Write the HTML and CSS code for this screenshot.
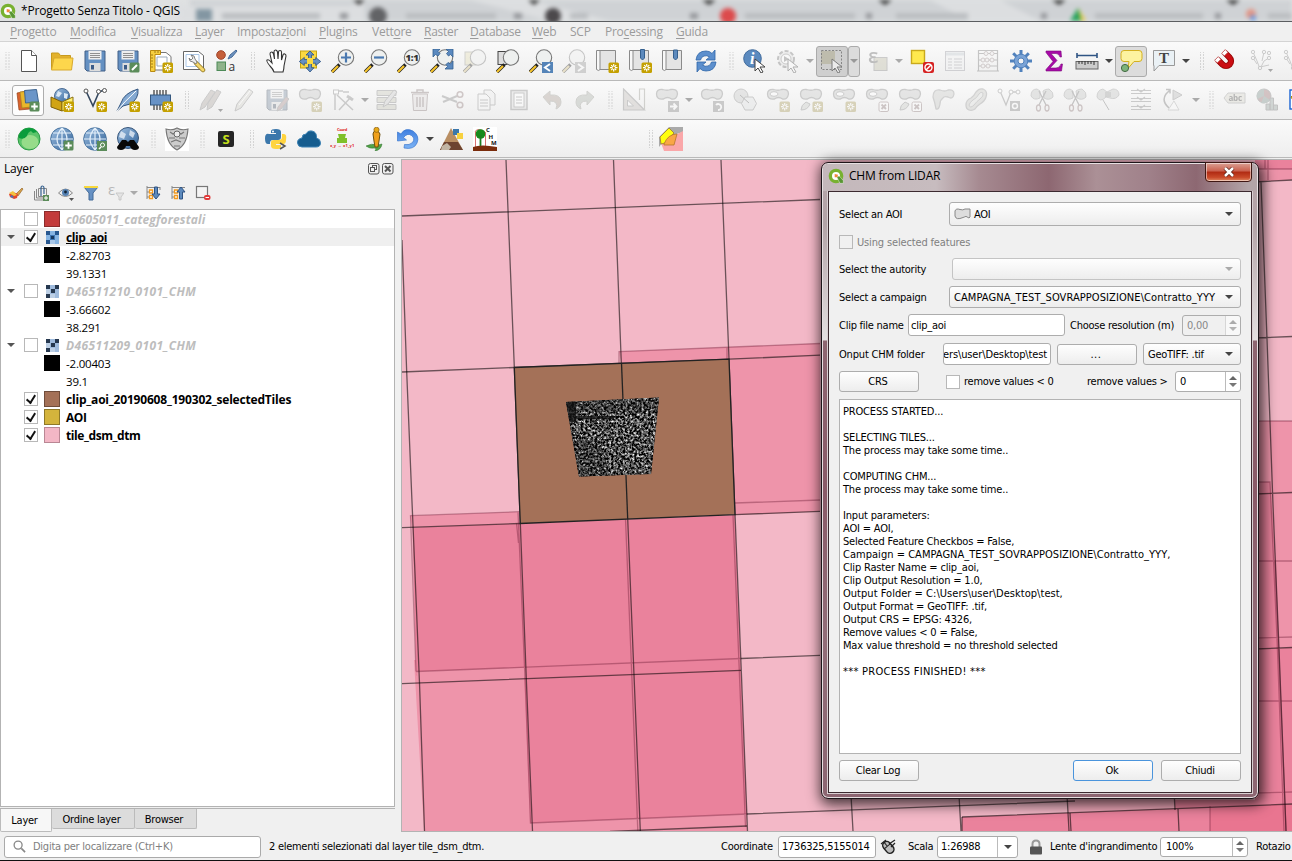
FILE: index.html
```html
<!DOCTYPE html>
<html lang="it">
<head>
<meta charset="utf-8">
<title>*Progetto Senza Titolo - QGIS</title>
<link rel="stylesheet" href="styles.css">
</head>
<body>
<svg class="defs" width="0" height="0">
  <defs>
    <linearGradient id="gGlobe" x1="0" y1="0" x2="1" y2="1"><stop offset="0" stop-color="#9fc0e2"/><stop offset="1" stop-color="#2d5f96"/></linearGradient>
    <linearGradient id="gUndo" x1="0" y1="0" x2="0" y2="1"><stop offset="0" stop-color="#3f7fe0"/><stop offset="1" stop-color="#7db4f5"/></linearGradient>
  </defs>
  <symbol id="b-new" viewBox="0 0 24 24"><rect x="13.5" y="13.5" width="10.5" height="10.5" rx="1.5" fill="#c4a000"/><path d="M18.7 15v7.5M15 18.7h7.5M16.2 16.2l5 5M21.2 16.2l-5 5" stroke="#fff" stroke-width="1.2"/><circle cx="18.7" cy="18.7" r="1.2" fill="#c4a000"/></symbol>
  <symbol id="b-add" viewBox="0 0 24 24"><rect x="13.5" y="13.5" width="10" height="10" rx="1.5" fill="#5b8c5a"/><path d="M18.5 15.2v6.6M15.2 18.5h6.6" stroke="#fff" stroke-width="1.8"/></symbol>
  <symbol id="b-del" viewBox="0 0 24 24"><rect x="14" y="14" width="9.5" height="9.5" rx="1.5" fill="#fff" stroke="#a87878"/><path d="M16.5 16.5l4.5 4.5M21 16.5l-4.500 4.500" stroke="#a87878" stroke-width="1.8"/></symbol>
  <symbol id="q" viewBox="0 0 24 24"><circle cx="12" cy="12" r="8.500" fill="#fff" stroke="#78b130" stroke-width="5"/><path d="M13 13l4-1 6 7v4h-5z" fill="#589632" stroke="#fff" stroke-width=".6"/><path d="M10 9l5 1-1 4-4 0z" fill="#f0883c"/></symbol>
  <symbol id="new" viewBox="0 0 24 24"><path d="M4.500 1.500h10l5 5v16h-15z" fill="#fff" stroke="#555"/><path d="M14.500 1.500v5h5" fill="#fff" stroke="#555"/></symbol>
  <symbol id="open" viewBox="0 0 24 24"><path d="M1.500 20V4h7l2 2.500h10V9" fill="#e3b22d" stroke="#c79a1e"/><path d="M1.500 21L4 9h19l-1.500 12z" fill="#fdd64c" stroke="#d8a92c"/></symbol>
  <symbol id="save" viewBox="0 0 24 24"><path d="M2 2h20v20H4l-2-2z" fill="#6490c2" stroke="#415f86"/><rect x="5.500" y="2" width="13" height="8.500" fill="#eee"/><path d="M7 4.500h10M7 6.500h10M7 8.500h10" stroke="#777" stroke-width=".8"/><rect x="6.500" y="14" width="11" height="8" fill="#ddd"/><rect x="8" y="16" width="3" height="4.500" fill="#3c5c88"/></symbol>
  <symbol id="saveas" viewBox="0 0 24 24"><use href="#save"/><rect x="13.500" y="13.500" width="10" height="10" rx="1.500" fill="#5b8c5a"/><path d="M16 21l5-5" stroke="#fff" stroke-width="2"/></symbol>
  <symbol id="layout" viewBox="0 0 24 24"><path d="M4 3.500h13l5 4V21H4z" fill="#fff" stroke="#777"/><path d="M8 8h10v9H8z" fill="none" stroke="#9ab" /><path d="M1.500 1.500h10v4H6v17H1.500z" fill="#f7cf3f" stroke="#b98a10"/><path d="M2 6h2M2 9h2M2 12h2M2 15h2M2 18h2M6 2v2M9 2v2" stroke="#8a6a10" stroke-width=".8"/><use href="#b-new"/></symbol>
  <symbol id="layman" viewBox="0 0 24 24"><path d="M1.500 2.500h15l5 4V20.500H1.500z" fill="#fff" stroke="#666"/><path d="M4 5.500h13v12H4z" fill="none" stroke="#aac6e6"/><path d="M14 14l7 7" stroke="#8b7220" stroke-width="4.500" stroke-linecap="round"/><path d="M14 14l7 7" stroke="#f4d66a" stroke-width="3" stroke-linecap="round"/><path d="M7 9q0 4 4 4l3 2 1-2-2-3q0-4-4-4l2 3-2 2z" fill="#eee" stroke="#777" stroke-width=".9"/></symbol>
  <symbol id="style" viewBox="0 0 24 24"><circle cx="6" cy="6" r="4.300" fill="#c55f3a" stroke="#a0452a"/><path d="M13 10l2-4 6-5 1 1-5 6z" fill="#6d93c0" stroke="#466a98"/><rect x="2" y="13" width="8.500" height="8.500" fill="#8fb38a" stroke="#4d8a57"/><text x="13.500" y="21.500" font-family="Open Sans" font-weight="400" font-size="12" fill="#333">a</text></symbol>
  <symbol id="hand" viewBox="0 0 24 24"><path d="M9 23q-1-3-4-6-4-5-3-6 2-1 4 2l1 1L5 5q0-2 1.500-2T8.500 5l1 5L9 3q0-2 1.500-2T12.500 3l.5 7 .5-7q0-1.500 1.500-1.500T16.500 3v8l1.500-5q.5-1.500 1.800-1T21 7l-2 10q0 3-1 6z" fill="#fff" stroke="#333" stroke-width="1.100"/></symbol>
  <symbol id="panto" viewBox="0 0 24 24"><rect x="2.500" y="2" width="16" height="17" fill="#fbd940" stroke="#c6a414"/><path d="M12 2l4 4h-2.500v4.500h4.200V8.500l5 4-5 4v-2.300h-4.200v4.500H16L12 23l-4-4.300h2.500v-4.500H6.300v2.300l-5-4 5-4v2h4.200V6H8z" fill="#6691c4" stroke="#2e5383" stroke-width=".8"/><rect x="9" y="9" width="6" height="6" fill="#fbd940"/></symbol>
  <symbol id="lens" viewBox="0 0 24 24"><path d="M8.500 15.500L1 23" stroke="#222" stroke-width="3.400"/><path d="M7 17l-6 6" stroke="#f7c52c" stroke-width="2.200"/><circle cx="15" cy="8.500" r="7.700" fill="#eef0ef" stroke="#777" stroke-width="1.100"/></symbol>
  <symbol id="zin" viewBox="0 0 24 24"><use href="#lens"/><path d="M15 3.500v10M10 8.500h10" stroke="#4a79b0" stroke-width="2.200"/></symbol>
  <symbol id="zout" viewBox="0 0 24 24"><use href="#lens"/><path d="M10 8.500h10" stroke="#4a79b0" stroke-width="2.200"/></symbol>
  <symbol id="z11" viewBox="0 0 24 24"><use href="#lens"/><text x="8.500" y="12" font-family="Open Sans" font-weight="800" font-size="9.500" fill="#333" textLength="13">1:1</text></symbol>
  <symbol id="zfull" viewBox="0 0 24 24"><use href="#lens"/><path d="M3 0h7L8 2.500l2 2L8 7 5.500 5.500 3 8zM23 0v8l-2.500-2.500L18.500 7 16.500 4.500l2-2L16 0zM23 20h-8l2.500-2.500L16 15.500l2-2 2.500 1.500L23 12z" fill="#5b89bf" stroke="#34608f" stroke-width=".8"/></symbol>
  <symbol id="zsel" viewBox="0 0 24 24"><rect x="2" y="3" width="11" height="13" fill="#f0e07a" stroke="#998"/><use href="#lens"/></symbol>
  <symbol id="zlay" viewBox="0 0 24 24"><rect x="2" y="2.500" width="11" height="13" fill="#ddd" stroke="#444"/><use href="#lens"/></symbol>
  <symbol id="zlast" viewBox="0 0 24 24"><use href="#lens"/><rect x="13" y="13" width="11" height="11" fill="#5584b8"/><path d="M21 15l-5 3.500 5 3.500" fill="none" stroke="#fff" stroke-width="2"/></symbol>
  <symbol id="znext" viewBox="0 0 24 24"><use href="#lens"/><rect x="13" y="13" width="11" height="11" fill="#999"/><path d="M16 15l5 3.500-5 3.500" fill="none" stroke="#fff" stroke-width="2"/></symbol>
  <symbol id="scroll" viewBox="0 0 24 24"><path d="M4 1.500h16.500v19H4" fill="#e4e4e4" stroke="#8a8a8a"/><path d="M1.500 1.500h3.500v19q-1 2-3.500 0z" fill="#f8f8f8" stroke="#8a8a8a"/></symbol>
  <symbol id="view3" viewBox="0 0 24 24"><use href="#scroll"/><use href="#b-new"/></symbol>
  <symbol id="bmnew" viewBox="0 0 24 24"><use href="#scroll"/><path d="M12.500 0.500h4v8.500l-2 2-2-2z" fill="#5d8abd" stroke="#35608f"/><use href="#b-new"/></symbol>
  <symbol id="bm" viewBox="0 0 24 24"><use href="#scroll"/><path d="M12.500 1h4v8l-2 2-2-2z" fill="#5d8abd" stroke="#35608f"/></symbol>
  <symbol id="refresh" viewBox="0 0 24 24"><path d="M2 11Q3 2 12 2q4 0 6 2.500L21 1v10h-9l3.500-3Q13 6 10 7q-3 1-3.500 4zM22 13q-1 9-10 9-4 0-6-2.500L3 23V13h9l-3.500 3Q11 18 14 17q3-1 3.500-4z" fill="#5c8fcd" stroke="#2f66a8" stroke-width=".8"/></symbol>
  <symbol id="cursor" viewBox="0 0 24 24"><path d="M12 10v12l3-3 3 5 2-1-3-5h5z" fill="#fff" stroke="#444"/></symbol>
  <symbol id="info" viewBox="0 0 24 24"><circle cx="9.500" cy="9.500" r="8.800" fill="#5b8abf" stroke="#3f6a9c"/><text x="7" y="15" font-family="Liberation Serif" font-style="italic" font-weight="bold" font-size="16" fill="#fff">i</text><use href="#cursor"/></symbol>
  <symbol id="action" viewBox="0 0 24 24"><circle cx="10" cy="10" r="8" fill="#ddd" stroke="#777" stroke-width="2" stroke-dasharray="4 2"/><circle cx="10" cy="10" r="5" fill="#fff" stroke="#888"/><path d="M8 7l5 3-5 3z" fill="#777"/><use href="#cursor"/></symbol>
  <symbol id="select" viewBox="0 0 24 24"><rect x="1" y="2" width="14" height="13" fill="#b4b098"/><path d="M1.500 1.500h20v19h-20z" fill="none" stroke="#555" stroke-dasharray="2 1.500"/><use href="#cursor"/></symbol>
  <symbol id="selexp" viewBox="0 0 24 24"><rect x="7" y="8.500" width="13" height="13" fill="#c4c088" stroke="#888"/><text x="1" y="14" font-family="Open Sans" font-weight="600" font-size="20" fill="#666">ε</text></symbol>
  <symbol id="desel" viewBox="0 0 24 24"><rect x="1.500" y="1.500" width="13" height="13" fill="#ffe94e" stroke="#c9a91c" stroke-width="1.400"/><rect x="13" y="13" width="11" height="11" rx="2" fill="#d62222"/><circle cx="18.500" cy="18.500" r="3.500" fill="none" stroke="#fff" stroke-width="1.400"/><path d="M16 21l5-5" stroke="#fff" stroke-width="1.400"/></symbol>
  <symbol id="table" viewBox="0 0 24 24"><rect x="2.500" y="2.500" width="19" height="19" fill="#eef1f4" stroke="#99a"/><path d="M3 5h18" stroke="#bcd" stroke-width="3"/><path d="M5 10h4M11 10h8M5 13h4M11 13h8M5 16h4M11 16h8M5 19h4M11 19h8" stroke="#99a"/></symbol>
  <symbol id="abacus" viewBox="0 0 24 24"><path d="M2 1.500h20M2.500 1v21M21.500 1v21M1 22h22M3 4.500h18M3 11h18M3 17h18" fill="none" stroke="#777" stroke-width="1.200"/><g fill="#f3ecec" stroke="#a88"><circle cx="10" cy="4.500" r="2"/><circle cx="16" cy="4.500" r="2"/><circle cx="7" cy="11" r="2"/><circle cx="11" cy="11" r="2"/><circle cx="16" cy="11" r="2"/><circle cx="7" cy="17" r="2"/><circle cx="12" cy="17" r="2"/></g></symbol>
  <symbol id="cog" viewBox="0 0 24 24"><g stroke="#5182bd" stroke-width="3"><path d="M12 1v22M1 12h22M4.200 4.200l15.600 15.600M19.800 4.200L4.200 19.800"/></g><circle cx="12" cy="12" r="6.800" fill="#7aa3d6" stroke="#5182bd"/><circle cx="12" cy="12" r="3" fill="#f4f4f4" stroke="#5182bd"/></symbol>
  <symbol id="sigma" viewBox="0 0 24 24"><path d="M4 2h15l.5 6H18q-1-3.500-4-3.500H9l6 7-7 7.500h6q4 0 5-4h1.500L19.500 22H4v-1.500l7-8L4 3.500z" fill="#a80aa8" stroke="#7b0a7b" stroke-width=".6"/></symbol>
  <symbol id="measure" viewBox="0 0 24 24"><path d="M2 6.500h20M2 4v5M22 4v5" stroke="#2f5484" stroke-width="1.600"/><rect x="1" y="12.500" width="22" height="7.500" fill="#ccc" stroke="#666"/><path d="M4 12v3M7 12v3M10 12v4M13 12v3M16 12v3M19 12v4" stroke="#333" stroke-width="1"/></symbol>
  <symbol id="tip" viewBox="0 0 24 24"><path d="M5 1.500h15q3 0 3 3v5q0 3-3 3h-5l-6 7 1-7H5q-3 0-3-3v-5q0-3 3-3z" fill="#fdf3a0" stroke="#d4b021"/><circle cx="6" cy="19" r="3.600" fill="#7db37a" stroke="#446b44"/></symbol>
  <symbol id="ann" viewBox="0 0 24 24"><path d="M1.500 1.500h21v15H7L2 22v-5.500h-.5z" fill="#eaf1f5" stroke="#999"/><text x="7" y="14" font-family="Liberation Serif" font-weight="bold" font-size="15" fill="#444">T</text></symbol>
  <symbol id="magnet" viewBox="0 0 24 24"><g transform="rotate(-45 12 12) translate(12 12) scale(.95) translate(-12 -12)"><path d="M4 5v7a8 8 0 0 0 16 0V5h-5.500v7a2.500 2.500 0 0 1-5 0V5z" fill="#cb0d12" stroke="#900"/><path d="M4 3h5.500v4H4zM14.500 3H20v4h-5.500z" fill="#fff" stroke="#b44" stroke-width=".8"/></g></symbol>
  <symbol id="vtx" viewBox="0 0 24 24"><path d="M4 3l4 9 3 8 4-8 5-3M4 9l4 6M11 18l9-2M15 3l-2 9" fill="none" stroke="#888"/><g fill="#eee" stroke="#888"><circle cx="4" cy="3" r="1.700"/><circle cx="4" cy="9" r="1.700"/><circle cx="15" cy="3" r="1.700"/><circle cx="20" cy="9" r="1.700"/><circle cx="11" cy="19" r="1.700"/><circle cx="20" cy="4" r="1.700"/></g><path d="M19 20h5l-2.500 3z" fill="#333"/></symbol>
  <symbol id="dsrc" viewBox="0 0 24 24"><path d="M1 5l9-2 4 18-11 1z" fill="#d9632c" stroke="#97401a" stroke-width=".7"/><path d="M4 4l11-1v16l-9 1z" fill="#e9b62b" stroke="#a5811e" stroke-width=".7"/><path d="M8.500 2.500l12-1 2 12.500-13 1z" fill="#6a95c8" stroke="#3c638f"/><use href="#b-add"/></symbol>
  <symbol id="gpkg" viewBox="0 0 24 24"><circle cx="12" cy="8" r="7.500" fill="url(#gGlobe)" stroke="#4a6c94"/><path d="M8 3l4 2-3 4-3-1zM14 5l4 1-1 5-3-1z" fill="#dbe8f4"/><path d="M1 9l11 5v9L1 19z" fill="#d1a414" stroke="#7d6009"/><path d="M12 14l11-5v9l-11 5z" fill="#fff176" stroke="#8b7010"/><use href="#b-new"/></symbol>
  <symbol id="vnew" viewBox="0 0 24 24"><path d="M3 3l7 15 6-14 5-2" fill="none" stroke="#34475e" stroke-width="1.600"/><g fill="#fff" stroke="#555"><circle cx="3" cy="3" r="2"/><circle cx="15.500" cy="3.500" r="2"/><circle cx="21.500" cy="2.500" r="2"/></g><use href="#b-new"/></symbol>
  <symbol id="feather" viewBox="0 0 24 24"><path d="M1 23L5 15Q8 5 22 1q1 10-8 15l-7 2z" fill="#84a9d2" stroke="#33557f"/><path d="M1 23Q8 14 20 3" fill="none" stroke="#fff"/><use href="#b-new"/></symbol>
  <symbol id="chip" viewBox="0 0 24 24"><path d="M5 2v20M8 2v20M11 2v20M14 2v20M17 2v20" stroke="#444" stroke-width="1.300"/><rect x="1.500" y="7" width="20" height="10" fill="#6792c6" stroke="#35587f"/><use href="#b-new"/></symbol>
  <symbol id="pencil" viewBox="0 0 24 24"><path d="M3 23l2-7L17 1l4 3L9 20z" fill="#d8d4c4" stroke="#888"/><path d="M7 17L18 3" stroke="#fff"/></symbol>
  <symbol id="pencils" viewBox="0 0 24 24"><path d="M1 22l2-7L12 2l4 2L6 19zM8 22l1-7L18 2l4 2-9 15z" fill="#b9a79c" stroke="#888"/><path d="M19 21h5l-2.500 3z" fill="#333"/></symbol>
  <symbol id="saveed" viewBox="0 0 24 24"><use href="#save"/><path d="M12 23l1-4 8-10 3 2-8 10z" fill="#c88" stroke="#888"/></symbol>
  <symbol id="blob" viewBox="0 0 24 24"><path d="M1.500 6q0-5 6-4.500 5 1.500 8 0 7-1 7 4.500-1 6-6 5-4-3-8 0Q1.500 12 1.500 6z" fill="#c6cac6" stroke="#888" stroke-width="1.300"/></symbol>
  <symbol id="blobn" viewBox="0 0 24 24"><use href="#blob"/><use href="#b-new"/></symbol>
  <symbol id="blobd" viewBox="0 0 24 24"><use href="#blob"/><ellipse cx="8" cy="6" rx="4" ry="2.300" fill="#fff" stroke="#888"/><use href="#b-del"/></symbol>
  <symbol id="blobp" viewBox="0 0 24 24"><use href="#blob"/><path d="M2 22q0-5 5-8l4 2q-2 6-9 6z" fill="#c9cfc6" stroke="#888"/><use href="#b-new"/></symbol>
  <symbol id="blobr" viewBox="0 0 24 24"><use href="#blob"/><ellipse cx="8" cy="6" rx="4" ry="2.300" fill="#fff" stroke="#888"/><use href="#b-new"/></symbol>
  <symbol id="blobx" viewBox="0 0 24 24"><use href="#blob"/><path d="M2 22q0-5 5-8l4 2q-2 6-9 6z" fill="#c9cfc6" stroke="#888"/><use href="#b-del"/></symbol>
  <symbol id="blobm" viewBox="0 0 24 24"><use href="#blob"/><rect x="13" y="13" width="11" height="11" fill="#888"/><path d="M15 18.500h6M18.500 15.500l3 3-3 3" fill="none" stroke="#fff" stroke-width="1.800"/></symbol>
  <symbol id="bloro" viewBox="0 0 24 24"><use href="#blob"/><rect x="13" y="13" width="11" height="11" fill="#888"/><path d="M16 17a3 3 0 1 1 2 5" fill="none" stroke="#fff" stroke-width="1.800"/></symbol>
  <symbol id="simp" viewBox="0 0 24 24"><circle cx="8" cy="8" r="7" fill="#c6cac6" stroke="#888"/><path d="M12 9h8l3.500 6.500L20 22h-8l-3.500-6.500z" fill="#dfe3e6" stroke="#888"/><path d="M7 7l9 8" stroke="#666"/></symbol>
  <symbol id="reshape" viewBox="0 0 24 24"><path d="M2 9q0-8 7-7 5 2 8 0 6-1 6 4-1 6-6 3-4-1-5 1-3 2-3 6-1 6-4 5-1-6-3-12z" fill="#c8ccc4" stroke="#999" stroke-width="1.300"/></symbol>
  <symbol id="offset" viewBox="0 0 24 24"><path d="M2 17q0-5 5-7 3-2 5-6 3-4 7-3 5 2 3 8-1 4-6 7-3 2-5 5-3 2-6 1-3-1-3-5z" fill="#c9cac0" stroke="#999" stroke-width="1.300"/><path d="M5 17q1-3 4-5 4-2 6-6 2-3 4-1 1 3-3 6-3 2-6 6-4 4-5 0z" fill="#dfe1dd" stroke="#999"/></symbol>
  <symbol id="vupd" viewBox="0 0 24 24"><path d="M3 3l6 14 5-13h6" fill="none" stroke="#888" stroke-width="1.300"/><g fill="#fff" stroke="#888"><circle cx="3" cy="3" r="2"/><circle cx="14" cy="4" r="2"/><circle cx="21" cy="4" r="2"/></g><rect x="13" y="13" width="10" height="10" fill="#888"/><circle cx="18" cy="18" r="2.500" fill="none" stroke="#fff" stroke-width="1.500"/></symbol>
  <symbol id="split" viewBox="0 0 24 24"><path d="M1 8q0-7 6-7l3 2v7q-6 3-9-2zM13 3q2-2 6-2 5 3 4 8-4 4-9 1z" fill="#c3c7c3" stroke="#999"/><path d="M9 3l7 14M16 3L9 17" stroke="#777" stroke-width="1.300"/><ellipse cx="8.500" cy="20" rx="2" ry="3" fill="none" stroke="#a77" stroke-width="1.300"/><ellipse cx="17" cy="20" rx="2" ry="3" fill="none" stroke="#a77" stroke-width="1.300"/></symbol>
  <symbol id="merge" viewBox="0 0 24 24"><path d="M1 9q0-7 6-8l4 3 6-3q6 0 6 6-3 5-9 3l-4-1Q4 15 1 9z" fill="#c3c7c3" stroke="#999"/><path d="M10 4v5M12 4v5M14 4v5M7 12l6 10" stroke="#777"/></symbol>
  <symbol id="mattr" viewBox="0 0 24 24"><path d="M2 2.500h20M2 5.500h20M2 10.500h20M2 13.500h20M2 18.500h20M2 21.500h20M8 1l4 3 4-3M8 9l4 3 4-3M8 17l4 3 4-3" fill="none" stroke="#888" stroke-width="1.100"/></symbol>
  <symbol id="rots" viewBox="0 0 24 24"><path d="M7 20Q-1 13 4 6l4-4M4 1.500h4v4" fill="none" stroke="#777" stroke-width="1.500"/><path d="M11 2v10l9-5z" fill="#bbb" stroke="#888"/><path d="M6 22h11l-5-9z" fill="#fff" stroke="#aaa"/></symbol>
  <symbol id="vtool" viewBox="0 0 24 24"><path d="M4 22V3h8M12 4h6M6 7L22 22M8 22L20 9" fill="none" stroke="#888" stroke-width="1.500"/><rect x="2.500" y="2" width="5" height="4" fill="#fff" stroke="#888"/><path d="M16 8l6 4" stroke="#888" stroke-width="3"/></symbol>
  <symbol id="mform" viewBox="0 0 24 24"><path d="M2 2.500h19v5H2zM2 9.500h19v5H2zM2 16.500h19v5H2z" fill="#c9c9a8" stroke="#888"/><path d="M8 19l2-6 9-11 3 2-9 12z" fill="#ccc" stroke="#888"/></symbol>
  <symbol id="trash" viewBox="0 0 24 24"><path d="M4.500 6h15l-1 16.500h-13z" fill="#e8dcdc" stroke="#977"/><path d="M3 4.500h18M9 4V2h6v2M9 9v10M12 9v10M15 9v10" fill="none" stroke="#977" stroke-width="1.500"/></symbol>
  <symbol id="cut" viewBox="0 0 24 24"><path d="M1 8l15 6M2 14L16 8" stroke="#888" stroke-width="2"/><circle cx="19" cy="6.500" r="2.800" fill="none" stroke="#a77" stroke-width="1.600"/><circle cx="19" cy="17" r="2.800" fill="none" stroke="#a77" stroke-width="1.600"/></symbol>
  <symbol id="copy" viewBox="0 0 24 24"><path d="M10 2h7l4 4v11H10z" fill="#eee" stroke="#888"/><path d="M4 6h8l4 4v12H4z" fill="#f6f6f6" stroke="#888"/><path d="M6 12h8M6 15h8M6 18h8" stroke="#888"/></symbol>
  <symbol id="paste" viewBox="0 0 24 24"><rect x="4" y="2.500" width="16" height="19" fill="#ddd" stroke="#888" stroke-width="1.500"/><rect x="7" y="5" width="10" height="14" fill="#fff" stroke="#888"/><path d="M9 9h6M9 12h6M9 15h6M9 2.500h6" stroke="#888" stroke-width="1.200"/></symbol>
  <symbol id="undo" viewBox="0 0 24 24"><path d="M3 9l7-6v4q11-1 11 7 0 5-5 7 3-8-6-8v4z" fill="#bf9e84" stroke="#998"/></symbol>
  <symbol id="redo" viewBox="0 0 24 24"><path d="M21 9l-7-6v4Q3 6 3 14q0 5 5 7-3-8 6-8v4z" fill="#a5b5a0" stroke="#998"/></symbol>
  <symbol id="tri" viewBox="0 0 24 24"><path d="M1.500 1l21 21h-21z" fill="#cbbfb4" stroke="#888" stroke-width="1.200"/><path d="M5.500 12l6 6h-6z" fill="#fff" stroke="#888"/><path d="M17.500 12V1h5v21" fill="none" stroke="#998" stroke-width="1.200"/></symbol>
  <symbol id="abc" viewBox="0 0 24 24"><path d="M1 10l4-5h17v10H5z" fill="#dcd9be" stroke="#999"/><text x="5.500" y="13" font-family="Open Sans" font-weight="bold" font-size="8" fill="#444">abc</text></symbol>
  <symbol id="pie" viewBox="0 0 24 24"><circle cx="8" cy="8" r="7" fill="#c66" stroke="#777"/><path d="M8 8V1A7 7 0 0 0 1.500 11zM8 8l6 4q-3 4-9 3z" fill="#6a9a8c"/><path d="M10 22v-6h4v6zM14 22v-12h3.500v12zM17.500 22v-5h4v5z" fill="#8aa9a0" stroke="#777"/></symbol>
  <symbol id="lbl" viewBox="0 0 24 24"><rect x="1" y="2" width="22" height="19" fill="#fff" stroke="#1a64d4" stroke-width="1.400"/><path d="M2 9l4-4h6v9H5z" fill="#ffe04a" stroke="#a80"/></symbol>
  <symbol id="green" viewBox="0 0 24 24"><circle cx="12" cy="12" r="11" fill="#5cc46a" stroke="#2c9a45"/><ellipse cx="13" cy="15" rx="8.500" ry="7" fill="#96dc8a"/><path d="M2 8q3-7 11-7 5 1 7 4l-4 1-2-2q-3 1-4 5-3 4-8 2z" fill="#0a9c3c"/></symbol>
  <symbol id="globe" viewBox="0 0 24 24"><circle cx="12" cy="12" r="11.300" fill="url(#gGlobe)" stroke="#47739f"/><path d="M12 1v22M1 12h22M3 6h18M3 18h18M12 1Q2 12 12 23M12 1q10 11 0 22" fill="none" stroke="#e3effa" stroke-width="1.200"/></symbol>
  <symbol id="globea" viewBox="0 0 24 24"><use href="#globe"/><use href="#b-add"/></symbol>
  <symbol id="globes" viewBox="0 0 24 24"><use href="#globe"/><rect x="14" y="14" width="10" height="10" fill="#5b8c5a"/><circle cx="19.500" cy="18" r="2" fill="none" stroke="#fff"/><path d="M18 20l-2 2" stroke="#fff" stroke-width="1.400"/></symbol>
  <symbol id="bino" viewBox="0 0 24 24"><circle cx="12" cy="11" r="10.500" fill="url(#gGlobe)" stroke="#36557a"/><path d="M5 4l5 3-2 5-5-2zM14 3l5 3-2 5-4-3z" fill="#e6eef6" opacity=".8"/><path d="M6 13h4l2 2 2-2h4l5 7q0 3-4 3t-5-4h-4q-1 4-5 4t-4-3z" fill="#080808"/></symbol>
  <symbol id="shield" viewBox="0 0 24 24"><rect width="24" height="24" fill="#fff"/><path d="M1 2q6 2 11-1 5 3 11 1-1 16-11 21Q2 18 1 2z" fill="#ccc" stroke="#777" stroke-width="1.100"/><path d="M5 5l3 2 4-2 4 2 3-2M4 11h6M14 11h6M6 15l5-2 5 2M9 19h6" fill="none" stroke="#777" stroke-width="1.200"/><circle cx="12" cy="7" r="3" fill="#eee" stroke="#666"/></symbol>
  <symbol id="scp" viewBox="0 0 24 24"><rect x="4" y="4" width="16" height="16" rx="2" fill="#262626"/><text x="8.500" y="16.500" font-family="Open Sans" font-weight="bold" font-size="12.500" fill="#c5e01c" textLength="7" lengthAdjust="spacingAndGlyphs">S</text></symbol>
  <symbol id="py" viewBox="0 0 24 24"><path d="M12 2q5 0 5 3v5q0 3-3 3H9q-3 0-3 3v1H4q-3 0-3-5.500T5 7h7V6H7V4q0-2 5-2z" fill="#3b77ab"/><path d="M18 7h2q3 0 2 6 0 4-3 4h-7v1h5v2q0 2-5 2t-5-3v-4q0-2 3-2h5q3 0 3-3z" fill="#ffd43f"/><circle cx="9" cy="4.500" r="1" fill="#fff"/><path d="M16 16l5 3-5 3" fill="none" stroke="#555" stroke-width="1.500"/></symbol>
  <symbol id="cloud" viewBox="0 0 24 24"><path d="M5 20q-4 0-4.500-4T5 11q0-4 4-4 2-4 6-3 5 1 4.500 7 4 1 4 5T19 20z" fill="#165d8f" stroke="#3e83b4"/></symbol>
  <symbol id="coord" viewBox="0 0 24 24"><text x="7" y="4" font-family="Open Sans" font-weight="bold" font-size="4" fill="#e01b24" textLength="10">Coord</text><path d="M8 7h8l-1 4h2v5H7v-5h2z" fill="#7fc02a"/><text x="0" y="20" font-family="Open Sans" font-weight="bold" font-size="4" fill="#e01b24" textLength="24">x,y → x1,y1</text></symbol>
  <symbol id="worm" viewBox="0 0 24 24"><path d="M3 19q5-3 12-1l4-1q-1 6-7 7 2-3-1-3-4 1-8-2z" fill="#52a447" stroke="#2c6e2a" stroke-width=".5"/><path d="M12 20l-1-6-1-7q0-3 3-3t4 3l-1 7-1 6z" fill="#f0a01c" stroke="#6b5010"/><circle cx="13.500" cy="2.800" r="2.600" fill="#e6a818" stroke="#8a5c10" stroke-width=".7"/></symbol>
  <symbol id="bundo" viewBox="0 0 24 24"><path d="M8 21q10 2 13-5t-4-12Q9 0 5 7L1.500 5v9l9-1-3-2.500q4-5 8-2t1 7q-3 3-8 2z" fill="url(#gUndo)" stroke="#3b77cf" stroke-width=".7"/></symbol>
  <symbol id="pyra" viewBox="0 0 24 24"><path d="M11 1l12 22H0z" fill="#b98e63"/><path d="M4 15h14l5 8H0z" fill="#6d4330"/><path d="M2 19l5-3 4 4-2 3H1z" fill="#c2b5a4"/><path d="M13 2h6v6h-6z" fill="#3b77ab"/><path d="M17 6h6v6h-6z" fill="#f7d13f"/></symbol>
  <symbol id="chm" viewBox="0 0 24 24"><rect width="24" height="24" fill="#fff"/><path d="M2.500 20V5M12.500 20V5M2 5q2-5 10 0" fill="none" stroke="#c33" stroke-width=".7"/><circle cx="7.500" cy="7" r="4.800" fill="#188a1c"/><path d="M7.500 8v12" stroke="#1f7c22" stroke-width="1.800"/><path d="M0 20q8-3 24 0v4H0z" fill="#7a2c0c"/><g font-family="Open Sans" font-weight="bold" font-size="6" fill="#111"><text x="13" y="5">C</text><text x="15.500" y="11.500">H</text><text x="18" y="18">M</text></g></symbol>
  <symbol id="poly" viewBox="0 0 24 24"><path d="M10 0h14v5L8 10 0 20V10z" fill="#aaa"/><path d="M5 24L2 16 24 4v20z" fill="#faa7a9"/><path d="M1 10l9-9 5 5-9 10-4 1z" fill="#ffff10" stroke="#9a7b2c" stroke-width=".8"/><path d="M5 17q4-10 13-10l-3 11H5z" fill="#f9a646" stroke="#b5762a" stroke-width=".8"/></symbol>
  <symbol id="ras" viewBox="0 0 13 13"><rect width="13" height="13" fill="#86b4e2"/><path d="M0 0h4v4H0zM9 0h4v4H9zM0 9h4v4H0z" fill="#27578f"/><path d="M4 4h5v5H4z" fill="#3f77b5"/><path d="M5 5h3v3H5z" fill="#16375e"/><path d="M4 9h5v4H4z" fill="#a9c8ea"/></symbol>
  <symbol id="ras2" viewBox="0 0 13 13"><rect width="13" height="13" fill="#9fbbdd"/><path d="M0 0h4v4H0zM9 0h4v4H9zM5 4h4v4H5zM0 9h4v4H0z" fill="#26384f"/><path d="M4 9h5v4H4zM0 4h4v5H0z" fill="#bdd0e6"/></symbol>
  <symbol id="brush" viewBox="0 0 16 16"><path d="M8 9l6-6 1 1-5 7z" fill="#d7a14a" stroke="#8c5c20" stroke-width=".6"/><path d="M1 9l4-2 5 2-1 4-3 1-4-2z" fill="#e4452c"/><path d="M1 8l4-2 4 4-3 1z" fill="#f3c33f"/><path d="M2 12l2-2 2 3z" fill="#3b78c9"/></symbol>
  <symbol id="grp" viewBox="0 0 16 16"><path d="M1.500 6v9h9M3.500 4v9h9M5.500 3.500h8v8h-8z" fill="none" stroke="#888"/><path d="M8 11V3q0-2 1.500-2T11 3v6" fill="none" stroke="#34608f" stroke-width="1.200"/><rect x="10" y="10" width="6" height="6" fill="#5b8c5a"/><path d="M13 11v4M11 13h4" stroke="#fff"/></symbol>
  <symbol id="eye" viewBox="0 0 16 16"><path d="M.500 8q7-8 14 0-7 7-14 0z" fill="#eee" stroke="#888"/><circle cx="7.500" cy="7.500" r="3.500" fill="#5481b3"/><circle cx="7.500" cy="7" r="1.400" fill="#123"/><path d="M11 13h5l-2.500 3z" fill="#555"/></symbol>
  <symbol id="funnel" viewBox="0 0 16 16"><path d="M1 2h14l-5 6v7H6V8z" fill="#6691c4" stroke="#436a98"/><path d="M1 1h14v2H1z" fill="#f7d83c"/></symbol>
  <symbol id="epsf" viewBox="0 0 16 16"><text x="0" y="10" font-family="Open Sans" font-weight="400" font-size="15" fill="#b8b8b8">ε</text><path d="M8 8h8l-3 4v3h-2v-3z" fill="#e4e4e4" stroke="#c0c0c0" stroke-width=".8"/></symbol>
  <symbol id="expand" viewBox="0 0 16 16"><path d="M2 1v13M2 2.500h13M2 7h3M2 12h3M15 2v3" fill="none" stroke="#888"/><path d="M4.500 5h3v3h-3zM4.500 10.500h3v3h-3z" fill="#fff" stroke="#f39a1e" stroke-width="1.300"/><path d="M9.500 2h3v7H15l-4 5-4-5h2.500z" fill="#5d8abd" stroke="#2e5383"/></symbol>
  <symbol id="collapse" viewBox="0 0 16 16"><path d="M2 1v13M2 2.500h13M2 7h3M2 12h3" fill="none" stroke="#888"/><path d="M4.500 5h3v3h-3zM4.500 10.500h3v3h-3z" fill="#fff" stroke="#f39a1e" stroke-width="1.300"/><path d="M9.500 14h3V7H15l-4-5-4 5h2.500z" fill="#5d8abd" stroke="#2e5383"/></symbol>
  <symbol id="remove" viewBox="0 0 16 16"><rect x="1.500" y="1.500" width="11" height="11" fill="#f4f4f4" stroke="#777" stroke-width="1.200"/><rect x="9" y="10" width="6.500" height="5" rx="2" fill="#e23b3b"/><path d="M10.500 12.500h3.500" stroke="#fff"/></symbol>
</svg>

<header class="titlebar">
  <svg class="glass" viewBox="0 0 1292 21" preserveAspectRatio="none">
    <g class="smear"><path d="M190 0h1102v21H190z" fill="#cfd2d5"/><path d="M180 6h170l12-6h2v21H180zM470 0h60l80 21h-60zM930 0h70l40 21h-70z" fill="#dcdee0"/><rect x="196" y="9" width="16" height="12" fill="#8396a2"/><path d="M222 13h98v6h-98zM406 13h90v6h-90zM570 13h18v6h-18zM745 13h110v6H745zM896 13h72v6h-72zM1095 13h108v6h-108zM1268 13h24v6h-24z" fill="#bbbec1"/><circle cx="378" cy="16" r="9" fill="#626366"/><circle cx="553" cy="16" r="8" fill="#4c494c"/><circle cx="728" cy="16" r="8" fill="#dc4b4c"/><path d="M340 13h8v6h-8zM514 13h8v6h-8zM690 13h8v6h-8zM866 13h6v6h-6zM1041 13h6v6h-6zM1215 13h6v6h-6z" fill="#96989c"/><path d="M353 0h12l-6 5zM528 0h12l-6 5zM702 0h14l-7 5zM878 0h14l-7 5zM1052 0h14l-7 5zM1226 0h14l-7 5z" fill="#333"/><path d="M1078 8l7 13h-15z" fill="#22a15b"/><path d="M1078 8l8 13h-5z" fill="#e9c83e"/><circle cx="1251" cy="14" r="5" fill="#e39483"/><circle cx="1253" cy="18" r="3" fill="#6d9be0"/></g>
  </svg>
  <svg class="logo"><use href="#q"/></svg><span>*Progetto Senza Titolo - QGIS</span>
</header>

<nav class="menu">
  <span class="m1"><u>P</u>rogetto</span><span class="m2"><u>M</u>odifica</span><span class="m3"><u>V</u>isualizza</span><span class="m4"><u>L</u>ayer</span><span class="m5">Impostaz<u>i</u>oni</span><span class="m6"><u>P</u>lugins</span><span class="m7">Vett<u>o</u>re</span><span class="m8"><u>R</u>aster</span><span class="m9"><u>D</u>atabase</span><span class="m10"><u>W</u>eb</span><span class="m11">SCP</span><span class="m12">Pro<u>c</u>essing</span><span class="m13"><u>G</u>uida</span>
</nav>

<div class="bar">
  <i class="g g12"></i><b><svg><use href="#new"/></svg></b><b><svg><use href="#open"/></svg></b><b><svg><use href="#save"/></svg></b><b><svg><use href="#saveas"/></svg></b><b><svg><use href="#layout"/></svg></b><b><svg><use href="#layman"/></svg></b><b><svg><use href="#style"/></svg></b>
  <i class="g g17"></i><b><svg><use href="#hand"/></svg></b><b><svg><use href="#panto"/></svg></b><b><svg><use href="#zin"/></svg></b><b><svg><use href="#zout"/></svg></b><b><svg><use href="#z11"/></svg></b><b><svg><use href="#zfull"/></svg></b><b class="off"><svg><use href="#zsel"/></svg></b><b><svg><use href="#zlay"/></svg></b><b><svg><use href="#zlast"/></svg></b><b class="off"><svg><use href="#znext"/></svg></b><b><svg><use href="#view3"/></svg></b><b><svg><use href="#bmnew"/></svg></b><b><svg><use href="#bm"/></svg></b><b><svg><use href="#refresh"/></svg></b>
  <i class="g g15"></i><b><svg><use href="#info"/></svg></b><b class="off"><svg><use href="#action"/></svg></b><i class="a a12 dim"></i><b class="down dimmed"><svg><use href="#select"/></svg></b><i class="a a12 down"></i><b class="off expr"><svg><use href="#selexp"/></svg></b><i class="a a13 dim"></i><b><svg><use href="#desel"/></svg></b><b class="off"><svg><use href="#table"/></svg></b><b class="off"><svg><use href="#abacus"/></svg></b><b><svg><use href="#cog"/></svg></b><b><svg><use href="#sigma"/></svg></b><b><svg><use href="#measure"/></svg></b><i class="a a11"></i><b class="down tipb"><svg><use href="#tip"/></svg></b><b><svg><use href="#ann"/></svg></b><i class="a a12"></i>
  <i class="g g17"></i><b><svg><use href="#magnet"/></svg></b><b class="off vx"><svg><use href="#vtx"/></svg></b><b class="off"><svg><use href="#vtx"/></svg></b>
</div>
<div class="bar">
  <i class="g g12"></i><b class="chk"><svg><use href="#dsrc"/></svg></b><b><svg><use href="#gpkg"/></svg></b><b><svg><use href="#vnew"/></svg></b><b><svg><use href="#feather"/></svg></b><b><svg><use href="#chip"/></svg></b>
  <i class="g g17"></i><b class="off"><svg><use href="#pencils"/></svg></b><b class="off"><svg><use href="#pencil"/></svg></b><b class="off"><svg><use href="#saveed"/></svg></b><b class="off"><svg><use href="#blobn"/></svg></b><b class="off"><svg><use href="#vtool"/></svg></b><i class="a a11 dim"></i><b class="off"><svg><use href="#mform"/></svg></b><b class="off"><svg><use href="#trash"/></svg></b><b class="off"><svg><use href="#cut"/></svg></b><b class="off"><svg><use href="#copy"/></svg></b><b class="off"><svg><use href="#paste"/></svg></b><b class="off"><svg><use href="#undo"/></svg></b><b class="off"><svg><use href="#redo"/></svg></b>
  <i class="g g15"></i><b class="off"><svg><use href="#tri"/></svg></b><b class="off"><svg><use href="#blobm"/></svg></b><i class="a a12 dim"></i><b class="off"><svg><use href="#bloro"/></svg></b><b class="off"><svg><use href="#simp"/></svg></b><b class="off"><svg><use href="#blobr"/></svg></b><b class="off"><svg><use href="#blobp"/></svg></b><b class="off"><svg><use href="#blobr"/></svg></b><b class="off"><svg><use href="#blobd"/></svg></b><b class="off"><svg><use href="#blobx"/></svg></b><b class="off"><svg><use href="#reshape"/></svg></b><b class="off"><svg><use href="#offset"/></svg></b><b class="off"><svg><use href="#vupd"/></svg></b><b class="off"><svg><use href="#split"/></svg></b><b class="off"><svg><use href="#split"/></svg></b><b class="off"><svg><use href="#merge"/></svg></b><b class="off"><svg><use href="#mattr"/></svg></b><b class="off"><svg><use href="#rots"/></svg></b><i class="a a12 dim"></i>
  <i class="g g15"></i><b class="off"><svg><use href="#abc"/></svg></b><b class="off"><svg><use href="#pie"/></svg></b><b><svg><use href="#lbl"/></svg></b>
</div>
<div class="bar last">
  <i class="g g12"></i><b><svg><use href="#green"/></svg></b><b><svg><use href="#globea"/></svg></b><b><svg><use href="#globes"/></svg></b><b><svg><use href="#bino"/></svg></b>
  <i class="g g15"></i><b><svg><use href="#shield"/></svg></b><i class="g g15"></i><b><svg><use href="#scp"/></svg></b><i class="g g17"></i><b><svg><use href="#py"/></svg></b><b><svg><use href="#cloud"/></svg></b><b><svg><use href="#coord"/></svg></b><b><svg><use href="#worm"/></svg></b><b><svg><use href="#bundo"/></svg></b><i class="a a11"></i><b><svg><use href="#pyra"/></svg></b><b><svg><use href="#chm"/></svg></b>
  <i class="g gwide"></i><b><svg><use href="#poly"/></svg></b>
</div>

<main class="work">
  <aside class="panel">
    <div class="phead"><span>Layer</span><svg class="pbtns" viewBox="0 0 26 12"><g fill="none" stroke="#555"><rect x=".5" y=".5" width="10.500" height="10.500" rx="2"/><rect x="4.500" y="2.500" width="4" height="4"/><rect x="2.500" y="4.500" width="4" height="4" fill="#f0f0f0"/><rect x="14.500" y=".5" width="10.500" height="10.500" rx="2"/><path d="M17 3l5.500 5.500M22.500 3L17 8.500" stroke-width="2"/></g></svg></div>
    <div class="ptools"><svg><use href="#brush"/></svg><svg><use href="#grp"/></svg><svg><use href="#eye"/></svg><svg><use href="#funnel"/></svg><svg><use href="#epsf"/></svg><i class="a dim"></i><svg><use href="#expand"/></svg><svg><use href="#collapse"/></svg><svg><use href="#remove"/></svg></div>
    <div class="tree">
      <div class="row"><i class="ex"></i><i class="cb"></i><i class="sw red"></i><em>c0605011_categforestali</em></div>
      <div class="row cur"><i class="ex on"></i><i class="cb on"></i><svg><use href="#ras"/></svg><strong class="ul">clip_aoi</strong></div>
      <div class="row leg"><i class="sw blk"></i><span>-2.82703</span></div>
      <div class="row leg"><i class="sw"></i><span>39.1331</span></div>
      <div class="row"><i class="ex on"></i><i class="cb"></i><svg><use href="#ras2"/></svg><em class="wide">D46511210_0101_CHM</em></div>
      <div class="row leg"><i class="sw blk"></i><span>-3.66602</span></div>
      <div class="row leg"><i class="sw"></i><span>38.291</span></div>
      <div class="row"><i class="ex on"></i><i class="cb"></i><svg><use href="#ras2"/></svg><em class="wide">D46511209_0101_CHM</em></div>
      <div class="row leg"><i class="sw blk"></i><span>-2.00403</span></div>
      <div class="row leg"><i class="sw"></i><span>39.1</span></div>
      <div class="row"><i class="ex"></i><i class="cb on"></i><i class="sw brn"></i><strong class="long">clip_aoi_20190608_190302_selectedTiles</strong></div>
      <div class="row"><i class="ex"></i><i class="cb on"></i><i class="sw yel"></i><strong>AOI</strong></div>
      <div class="row"><i class="ex"></i><i class="cb on"></i><i class="sw pnk"></i><strong>tile_dsm_dtm</strong></div>
    </div>
    <div class="tabs"><span class="tab act">Layer</span><span class="tab t2">Ordine layer</span><span class="tab t3">Browser</span></div>
  </aside>
  <div class="map">
    <svg viewBox="402 160 890 671">
      <defs>
        <filter id="noise" x="0" y="0" width="1" height="1" color-interpolation-filters="sRGB"><feTurbulence type="fractalNoise" baseFrequency=".43" numOctaves="3" seed="8"/><feColorMatrix values="1.800 .9 0 0 -1.050  1.800 .9 0 0 -1.050  1.800 .9 0 0 -1.050  0 0 0 0 1"/></filter>
        <clipPath id="aoi"><path d="M566 402l93-4.500-8 76.500-72 2.500z"/></clipPath>
      </defs>
      <rect x="402" y="160" width="890" height="671" fill="#f3b8c7"/>
      <g fill="#ee94aa">
        <path d="M619 351.500l201-8.200V511.500L735 515l-6-156-108 4z"/>
        <path d="M410 515.700l109-4 1 12-108 4zM414 660h8l105-5 5 176H424z"/>
        <path d="M1255 160h37v20l-37 2z"/>
        <path d="M1255 421h37v230h-37z"/><path d="M532 815l215-6v22H532z"/><path d="M1068 800h107v31h-107z" opacity=".4"/>
      </g>
      <g fill="#ea829c">
        <path d="M412.500 527.500l107.500-4 215-8.500 6 156 6 143-217 9-6-148-108 .6z"/>
        <path d="M1255 160h37v9h-37zM1255 482h15l6 79 3 87 13-1v184H1175V800h80z"/><path d="M962 817l330-13v27H962z"/>
      </g>
      <path d="M416 671.500l109-3.700v9.500l-106 4z" fill="#ee94aa"/>
      <path d="M1210 808l82-4v27h-82z" fill="#e97590"/>
      <g fill="none" stroke="#000" stroke-opacity=".56" stroke-width="1.300">
        <path d="M506 160l8.300 207 6 156 6 156 6.200 152M613.500 160l7.800 203 6.400 156 6.300 156 6.300 156M721 160l8 199 6 155 6.300 157 6.200 160M402 240l4.700 132 5 123 1.500 35 6.300 153 5 148"/>
        <path d="M402 216l418-16.500M402 372l112-4.500 215-8.300 91-4M402 527.700l118-4.200M735 514.600l85-3.200M402 683.600l339-13.300M741 658.500l79-3.200M747 814l68-2.600 260-10.400M610 831.500l137-5.500M962 817l330-13"/>
        <path d="M851 795l2 36M959 795l2 36M1067 795l2 36M1174 790l1 20M962 817v14M1070 813l1 18M1178 809l1 22"/>
        <path d="M1255 182l37-2M1255 338l37-1.500M1255 494l37-1.500M1255 649l37-1.500M1261 182l6 157 6 166 6 144 6 155 1 27"/>
      </g>
      <g fill="none" stroke="#5c0f28" stroke-opacity=".35" stroke-width="1.300">
        <path d="M619 363v-11.500l201-8M727 359v-11M735 503l85-3M416 671.500l-5.500-155.800 109-4M416 671.500l325-13M518 512l8 190 4.500 121 217-9M625.500 519l6.300 156 6 156M733 515l6.300 156 6.200 156M516.500 523l2 20"/>
        <path d="M1255 169h37M1265 160v9M1268 160v20M1255 421h37M1255 561h37M1255 638l37-1M1255 701h37M1255 793l37-1M1210 806v25M1255 482h15l7 156 7 193M1275 561l11 270"/>
      </g>
      <path d="M514.300 367.500l214.700-8.300 6 155.400-214.700 8.900z" fill="#a47158" stroke="#222" stroke-width="1.300"/>
      <path d="M621.500 363l6.200 156" stroke="#222" stroke-width="1.300"/>
      <g clip-path="url(#aoi)"><rect x="564" y="396" width="98" height="82" fill="#111"/><rect x="564" y="396" width="98" height="82" filter="url(#noise)"/><path d="M564 398h12v24h-10zM576 416h38v3h-38z" fill="#111" opacity=".8"/><path d="M576 400h84l-2 12h-82zM570 440h30l10 38h-36z" fill="#111" opacity=".25"/></g>
    </svg>
  </div>
</main>

<footer class="status">
  <div class="find"><svg viewBox="0 0 14 14"><circle cx="5.500" cy="5.500" r="4.300" fill="none" stroke="#888" stroke-width="1.400"/><path d="M9 9l4 4" stroke="#888" stroke-width="1.800"/></svg><span>Digita per localizzare (Ctrl+K)</span></div>
  <span class="msg">2 elementi selezionati dal layer tile_dsm_dtm.</span>
  <span class="s1">Coordinate</span><span class="box coordbox">1736325,5155014</span>
  <svg class="mouse" viewBox="0 0 16 16"><g transform="rotate(-40 8 8)"><rect x="4" y="2" width="8" height="13" rx="4" fill="#bbb" stroke="#222" stroke-width="1.500"/><path d="M8 2v5M4 7h8" stroke="#222"/></g><path d="M9 5l6-4M1 5l5-4M11 8l4-4" stroke="#222" stroke-width="1.200"/></svg>
  <span class="s2">Scala</span><span class="box scale"><span>1:26988</span><i class="a"></i></span>
  <svg class="lock" viewBox="0 0 14 16"><path d="M3.500 8V5q0-3.500 3.500-3.500T10.500 5v3" fill="none" stroke="#999" stroke-width="2"/><rect x="1" y="7.500" width="12" height="8" rx="1" fill="#555"/></svg>
  <span class="s3">Lente d'ingrandimento</span><span class="box mag"><span>100%</span><i class="sp"></i></span><span class="s4">Rotazio</span>
</footer>

<section class="dlg">
  <div class="dtitle"><svg><use href="#q"/></svg><span>CHM from LIDAR</span><div class="close"><svg viewBox="0 0 12 10"><path d="M2 1l8 8M10 1L2 9" stroke="#5b2018" stroke-width="4"/><path d="M2 1l8 8M10 1L2 9" stroke="#fff" stroke-width="2.500"/></svg></div></div>
  <div class="dbody">
    <div class="r r1"><label>Select an AOI</label><div class="combo"><svg viewBox="0 0 17 12"><path d="M1 3q1-3 5-1.500 3 1 5-.500h5v8l-1 1q-3-3-6-.500-7 3-8-1.500z" fill="#ddd" stroke="#888"/></svg><span>AOI</span><i class="a"></i></div></div>
    <div class="r r2"><i class="cb"></i><span>Using selected features</span></div>
    <div class="r r3"><label>Select the autority</label><div class="combo"><i class="a dim"></i></div></div>
    <div class="r r4"><label>Select a campaign</label><div class="combo"><span class="camp">CAMPAGNA_TEST_SOVRAPPOSIZIONE\Contratto_YYY</span><i class="a"></i></div></div>
    <div class="r r5"><label>Clip file name</label><div class="inp">clip_aoi</div><label class="l2">Choose resolution (m)</label><div class="spin off2"><span>0,00</span><i class="sp"></i></div></div>
    <div class="r r6"><label>Onput CHM folder</label><div class="inp"><span>ers\user\Desktop\test</span></div><div class="btn">...</div><div class="combo"><span>GeoTIFF: .tif</span><i class="a"></i></div></div>
    <div class="r r7"><div class="btn">CRS</div><i class="cb"></i><label class="l1">remove values &lt; 0</label><label class="l2">remove values &gt;</label><div class="spin"><span>0</span><i class="sp"></i></div></div>
    <pre class="log">PROCESS STARTED...

SELECTING TILES...
The process may take some time..

COMPUTING CHM...
The process may take some time..

Input parameters:
AOI = AOI,
Selected Feature Checkbos = False,
<span class="caps">Campaign = CAMPAGNA_TEST_SOVRAPPOSIZIONE\Contratto_YYY,</span>
Clip Raster Name = clip_aoi,
Clip Output Resolution = 1.0,
<span class="caps">Output Folder = C:\Users\user\Desktop\test,</span>
Output Format = GeoTIFF: .tif,
Output CRS = EPSG: 4326,
Remove values &lt; 0 = False,
Max value threshold = no threshold selected

<span class="fin">*** PROCESS FINISHED! ***</span></pre>
    <div class="r r8"><div class="btn">Clear Log</div><div class="btn ok">Ok</div><div class="btn">Chiudi</div></div>
  </div>
</section>
</body>
</html>
```
FILE: styles.css
```css
* { box-sizing: border-box; }
body { margin: 0; width: 1292px; height: 861px; overflow: hidden; position: relative; background: #f0f0f0; color: #000; display: flex; flex-direction: column; font: 11px/13px "DejaVu Sans Condensed", "DejaVu Sans", sans-serif; letter-spacing: -0.25px; border-bottom: 1px solid #111; white-space: nowrap; }
.defs { position: absolute; visibility: hidden; }
i, b { font-style: normal; flex: none; display: block; }

.titlebar { height: 22px; flex: none; background: #dfe1e2; border-bottom: 1px solid #5b5d60; position: relative; display: flex; align-items: center; font: 12px/16px "Open Sans", sans-serif; letter-spacing: -0.16px; overflow: hidden; }
.glass { position: absolute; inset: 0; width: 1292px; height: 21px; }
.smear { filter: blur(2.2px); }
.logo { width: 16px; height: 16px; position: relative; }
.titlebar span { margin-left: 5px; position: relative; }
.menu { height: 20px; flex: none; border-bottom: 1px solid #d4d4d4; display: flex; align-items: center; font: 12px/18px "Open Sans", sans-serif; color: #9b9b9b; padding-left: 10px; letter-spacing: -0.25px; }
.menu u { text-underline-offset: 2px; }
.m1 { width: 60px; } .m2 { width: 61px; } .m3 { width: 64px; } .m4 { width: 42px; } .m5 { width: 82px; } .m6 { width: 53px; } .m7 { width: 52px; } .m8 { width: 46px; } .m9 { width: 62px; } .m10 { width: 38px; } .m11 { width: 35px; } .m12 { width: 71px; }

.bar { height: 39px; flex: none; display: flex; align-items: center; background: linear-gradient(#fafafa, #eeeeee); border-bottom: 1px solid #b9b9b9; overflow: hidden; }
.bar.last { height: 38px; }
.bar b { width: 33px; height: 33px; display: flex; align-items: center; justify-content: center; border-radius: 3px; }
.bar svg { width: 24px; height: 24px; flex: none; }
.off svg { opacity: .38; filter: grayscale(.6); }
.down { background: #dcdcdc; border: 1px solid #ababab; height: 31px !important; }
b.down { width: 32px !important; }
.tipb { margin-left: 1px; }
.vx { margin-left: 2px; }
.dimmed { background: #cfcfcf; }
.dimmed svg { opacity: .6; }
.chk { background: #fdfdfd; border: 1px solid #adadad; width: 32px !important; margin-right: 1px; height: 31px !important; }
.expr { margin: 0 -3px 0 2px; }
.g { height: 18px; background: radial-gradient(circle, #b4b4b4 .7px, transparent 1px) center / 3px 3px; background-clip: content-box; }
.g12 { width: 12px; padding: 0 2px 0 4px; }
.g15 { width: 16px; padding: 0 4px 0 6px; }
.g17 { width: 17px; padding: 0 5px 0 6px; }
.gwide { width: 153px; padding: 0 1px 0 146px; }
.a { width: 12px; height: 20px; display: flex; align-items: center; justify-content: center; border-radius: 3px; }
.a::before { content: ""; border: 4px solid transparent; border-top: 4px solid #444; border-bottom: 0; }
.a.dim::before { border-top-color: #aaa; }
.a.down::before { border-top-color: #999; }
.a13 { width: 13px; }
.a11 { width: 11px; }

.work { flex: none; height: 674px; display: flex; }
.panel { width: 401px; padding-right: 6px; display: flex; flex-direction: column; }
.phead { height: 22px; display: flex; justify-content: space-between; align-items: center; padding: 0 1px 0 4px; font: 12px/16px "Open Sans", sans-serif; letter-spacing: -0.2px; }
.pbtns { width: 26px; height: 12px; }
.ptools { height: 29px; display: flex; align-items: center; gap: 9px; padding: 0 0 3px 8px; }
.ptools svg { width: 16px; height: 16px; flex: none; }
.ptools .a { width: 6px; margin-left: -2px; }
.ptools .a + svg { margin-left: -1px; }
.tree { height: 598px; border: 1px solid #b3b3b3; background: #fff; font: 12px/18px "Open Sans", sans-serif; letter-spacing: 0; }
.row { height: 18px; display: flex; align-items: center; }
.row.cur { background: #efefef; }
.row svg { width: 13px; height: 13px; margin: 0 7px 0 2px; }
.row.leg { padding-left: 43px; letter-spacing: -0.2px; font-size: 11.500px; }
.row em, .row strong, .row span { padding-top: 1px; }
.row em { font-weight: bold; color: #bdbdbd; letter-spacing: 0.15px; }
.row em.wide { letter-spacing: 0.38px; }
.row strong { font-weight: bold; letter-spacing: -0.42px; }
.row strong.long { letter-spacing: -0.19px; }
.ul { text-decoration: underline; }
.ex { width: 23px; height: 10px; }
.ex.on::before { content: ""; display: block; margin: 3px 0 0 6px; width: 0; border: 4px solid transparent; border-top: 4px solid #555; border-bottom: 0; }
.cb { width: 14px; height: 14px; border: 1px solid #b8b8b8; background: #fff; margin-right: 6px; }
.cb.on::before { content: ""; display: block; width: 4px; height: 8px; margin: 0 0 0 3px; border: solid #111; border-width: 0 2px 2px 0; transform: rotate(32deg) skewY(8deg); }
.sw { width: 16px; height: 16px; margin-right: 6px; }
.red { background: #c33b3b; border: 1px solid #8a2c2c; }
.blk { background: #000; }
.brn { background: #a47158; border: 1px solid #6f4c3b; }
.yel { background: #d4b43c; border: 1px solid #8e7828; }
.pnk { background: #f3b7c6; border: 1px solid #b98794; }
.tabs { display: flex; align-items: flex-start; border-top: 1px solid #b3b3b3; margin-top: 1px; font: 11px/13px "DejaVu Sans Condensed", sans-serif; }
.tab { height: 20px; padding: 4px 3px 0 0; text-align: center; background: #dcdcdc; border: 1px solid #bbb; border-top: 0; border-left: 0; border-radius: 0 0 2px 2px; }
.act { width: 52px; height: 23px; background: #f7f7f7; border-left: 1px solid #bbb; padding-top: 5px; }
.t2 { width: 83px; } .t3 { width: 62px; }
.map { width: 891px; border: 1px solid #b3b3b3; border-width: 1px 0 1px 1px; margin-top: 1px; height: 673px; overflow: hidden; }
.map svg { width: 890px; height: 671px; display: block; }

.status { height: 28px; flex: none; display: flex; align-items: center; padding: 1px 0 0 4px; }
.status > * { flex: none; }
.find { width: 257px; height: 22px; border: 1px solid #aaa; border-radius: 3px; background: #fff; display: flex; align-items: center; color: #808080; padding-left: 8px; }
.find svg { width: 13px; height: 13px; margin-right: 7px; }
.msg { width: 452px; margin-left: 8px; letter-spacing: -0.28px; }
.s1 { width: 57px; }
.box { height: 22px; border: 1px solid #aaa; border-radius: 3px; background: #fff; display: flex; align-items: center; padding-left: 3px; justify-content: space-between; }
.coordbox { width: 98px; }
.mouse { width: 16px; height: 16px; margin: 0 12px 0 4px; }
.s2 { width: 29px; }
.scale { width: 81px; }
.scale .a { width: 20px; border-left: 1px solid #bbb; border-radius: 0; }
.lock { width: 14px; height: 16px; margin: 0 7px 0 11px; }
.s3 { width: 110px; }
.mag { width: 88px; padding-left: 5px; height: 20px; }
.s4 { margin-left: 8px; }
.sp { width: 15px; height: 100%; border-left: 1px solid #bbb; display: flex; flex-direction: column; justify-content: center; align-items: center; gap: 3px; }
.sp::before, .sp::after { content: ""; border: 4px solid transparent; border-top: 0; border-bottom: 4px solid #666; }
.sp::after { border-bottom: 0; border-top: 4px solid #777; }

.dlg { position: absolute; left: 821px; top: 162px; width: 438px; height: 637px; border: 1px solid #1d1519; border-radius: 7px; padding: 0 6px 6px; background: linear-gradient(#b8a6aa 0, #b3a3a7 60px, #e4dfe0 177px, #8e6671 178px, #8a5a68 330px, #926d78 470px, #8d6672 100%); box-shadow: inset 0 0 0 1px #e6dfe1, 2px 3px 13px 3px rgba(0,0,0,.7); }
.dtitle { height: 27px; display: flex; align-items: center; font: 12px/16px "Open Sans", sans-serif; letter-spacing: -0.2px; background: linear-gradient(90deg, #c4b8bb 0, #c7bcbf 26%, #a68a91 36%, #8d6771 52%, #ab9096 63%, #a0818a 75%, #8d6872 86%, #b3a5a8 98%); margin: 1px -5px 0; padding: 0 0 3px 5px; border-radius: 5px 5px 0 0; position: relative; }
.dtitle svg { width: 16px; height: 16px; margin-right: 5px; }
.close { position: absolute; right: 5px; top: -2px; width: 47px; height: 20px; border: 1px solid #3f1713; border-radius: 0 0 4px 4px; background: linear-gradient(#dba094, #c9604d 45%, #b02a12 50%, #c94a2a 80%, #e08a62); box-shadow: inset 0 0 0 1px rgba(255,255,255,.5); display: flex; align-items: center; justify-content: center; }
.close svg { width: 12px; height: 10px; margin: 0; }
.dbody { height: 602px; background: #f0f0f0; border: 1px solid #3c2a30; box-shadow: 0 0 0 1px #d9cfd2; padding: 10px 10px 0; }
.r { display: flex; align-items: center; }
.combo, .btn, .inp, .spin { border: 1px solid #adadad; border-radius: 3px; background: linear-gradient(#fefefe, #ededed); height: 22px; display: flex; align-items: center; flex: none; }
.combo { padding-left: 4px; }
.combo .a { margin-left: auto; margin-right: 5px; }
.btn { width: 80px; justify-content: center; height: 21px; padding-right: 2px; }
.inp, .spin { background: #fff; padding-left: 2px; overflow: hidden; }
.spin { justify-content: space-between; padding-left: 4px; }
.r label { flex: none; }
.camp { letter-spacing: 0.08px; }
.r1 { height: 24px; } .r1 label { width: 110px; } .r1 .combo { width: 292px; height: 24px; } .r1 svg { width: 17px; height: 12px; margin-right: 3px; }
.r2 { height: 16px; margin-top: 8px; color: #808080; letter-spacing: -0.15px; } .r2 .cb { background: #f0f0f0; margin-right: 4px; }
.r3 { height: 22px; margin-top: 8px; } .r3 label { width: 113px; } .r3 .combo { width: 289px; border-color: #c4c4c4; }
.r4 { height: 22px; margin-top: 6px; } .r4 label { width: 110px; } .r4 .combo { width: 292px; }
.r5 { height: 22px; margin-top: 6px; } .r5 label { width: 69px; } .r5 .inp { width: 157px; } .r5 .l2 { width: 112px; margin-left: 5px; } .r5 .spin { width: 59px; height: 21px; }
.off2 { color: #888; background: #f0f0f0; }
.off2 .sp { opacity: .5; background: #fff; }
.r6 { height: 22px; margin-top: 7px; } .r6 label { width: 104px; letter-spacing: -0.18px; } .r6 .inp { width: 108px; justify-content: flex-end; padding: 0 3px 0 0; letter-spacing: -0.13px; } .r6 .btn { margin: 0 6px; letter-spacing: 0.6px; } .r6 .combo { width: 98px; }
.r7 { height: 21px; margin-top: 6px; } .r7 .cb { margin: 0 4px 0 27px; } .r7 .l1 { width: 123px; } .r7 .l2 { width: 88px; } .r7 .spin { width: 66px; height: 21px; }
.log { margin: 7px 0 0; height: 355px; border: 1px solid #b3b3b3; background: #fff; padding: 5px 3px; font: inherit; letter-spacing: -0.17px; line-height: 13px; }
.caps { letter-spacing: 0.03px; }
.fin { letter-spacing: 0.27px; }
.r8 { height: 21px; margin-top: 6px; gap: 8px; } .r8 .btn:first-child { margin-right: auto; }
.ok { border-color: #4a94dc; }
```
